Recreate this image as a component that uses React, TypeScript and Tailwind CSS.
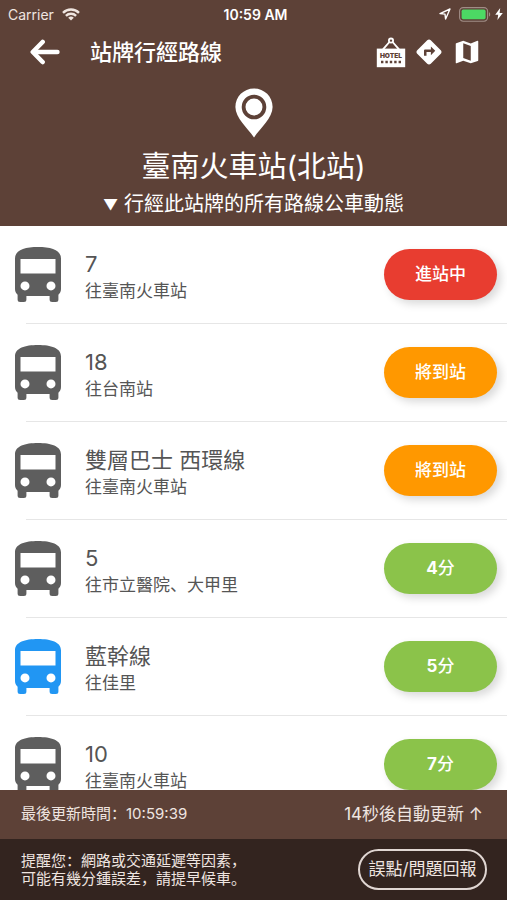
import clsx from 'clsx';
import { MdDirections, MdMap } from 'react-icons/md';

type Status = 'arriving' | 'soon' | 'minutes';

interface RouteDef {
  name: string;
  destination: string;
  status: Status;
  minutes?: number;
  trunk?: boolean;
}

const routes: RouteDef[] = [
  { name: '7', destination: '往臺南火車站', status: 'arriving' },
  { name: '18', destination: '往台南站', status: 'soon' },
  { name: '雙層巴士 西環線', destination: '往臺南火車站', status: 'soon' },
  { name: '5', destination: '往市立醫院、大甲里', status: 'minutes', minutes: 4 },
  { name: '藍幹線', destination: '往佳里', status: 'minutes', minutes: 5, trunk: true },
  { name: '10', destination: '往臺南火車站', status: 'minutes', minutes: 7 },
];

const statusColor: Record<Status, string> = {
  arriving: 'bg-[#e83d30]',
  soon: 'bg-[#ff9800]',
  minutes: 'bg-[#8bc34a]',
};

const statusLabel: Record<Status, string> = {
  arriving: '進站中',
  soon: '將到站',
  minutes: '分',
};

function WifiIcon() {
  return (
    <svg aria-hidden viewBox="0 0 18 13" className="h-[13px] w-[18px]" fill="none" stroke="currentColor" strokeWidth="2.4">
      <path d="M1 4.8a11.4 11.4 0 0 1 16 0" />
      <path d="M3.9 7.8a7.2 7.2 0 0 1 10.2 0" />
      <path d="M9 12.6 6.2 9.8a4 4 0 0 1 5.6 0z" fill="currentColor" stroke="none" />
    </svg>
  );
}

function LocationIcon() {
  return (
    <svg aria-hidden viewBox="0 0 12 12" className="h-3 w-3" fill="none" stroke="currentColor" strokeWidth="1.4" strokeLinejoin="round">
      <path d="M1 5.6 11 1 6.6 11 6 6.1z" />
    </svg>
  );
}

function BatteryIcon() {
  return (
    <svg aria-hidden viewBox="0 0 32 15" className="h-[15px] w-8">
      <rect x=".6" y=".6" width="28" height="13.6" rx="3.6" fill="none" stroke="#a08d86" strokeWidth="1.1" />
      <rect x="2.6" y="2.6" width="24" height="9.6" rx="1.6" fill="#4cd964" />
      <path d="M30 5.2c1.6.6 1.6 3.8 0 4.4z" fill="#a08d86" />
    </svg>
  );
}

function BoltIcon() {
  return (
    <svg aria-hidden viewBox="0 0 8 12" className="h-3 w-2" fill="currentColor">
      <path d="M5.2 0 .2 6.8h3L2.4 12 7.8 4.9H4.6z" />
    </svg>
  );
}

function BackIcon() {
  return (
    <svg
      aria-hidden
      viewBox="0 0 30 26"
      className="h-[26px] w-[30px]"
      fill="none"
      stroke="currentColor"
      strokeWidth="4.6"
      strokeLinecap="round"
      strokeLinejoin="round"
    >
      <path d="M12.6 3 2.8 13l9.8 10" />
      <path d="M4 13h23.4" />
    </svg>
  );
}

function HotelIcon() {
  return (
    <svg aria-hidden viewBox="0 0 30 31" className="h-[31px] w-[30px]">
      <circle cx="15" cy="3.6" r="2.1" fill="none" stroke="#fff" strokeWidth="1.8" />
      <path d="M13.4 5 7 12.4M16.6 5 23 12.4" stroke="#fff" strokeWidth="1.9" />
      <path d="M.8 11.6h28.4v18.6H.8z" fill="#fff" />
      <text x="15" y="20.9" textAnchor="middle" fontSize="6.6" fontWeight="900" fill="#5d4137" fontFamily="Inter, sans-serif">
        HOTEL
      </text>
      <path d="M5 25h20" stroke="#5d4137" strokeWidth="2.4" strokeDasharray="2.4 2" />
    </svg>
  );
}

function PinIcon() {
  return (
    <svg aria-hidden viewBox="0 0 38 50" className="h-[50px] w-[38px]">
      <path d="M19 .5C8.6.5.4 8.7.4 18.9.4 30 12.5 39.5 19 49.5 25.5 39.5 37.6 30 37.6 18.9 37.6 8.7 29.4.5 19 .5z" fill="#fff" />
      <circle cx="19" cy="19" r="10.4" fill="#fff" stroke="#5d4137" strokeWidth="3.8" />
    </svg>
  );
}

function BusIcon({ trunk }: { trunk?: boolean }) {
  return (
    <svg
      aria-hidden
      viewBox="0 0 46 55"
      className={clsx('h-[55px] w-[46px] shrink-0', trunk ? 'text-[#2196f3]' : 'text-[#5e5e5e]')}
    >
      <path
        fill="currentColor"
        fillRule="evenodd"
        d="M0 11.5C0 3 10 0 23 0s23 3 23 11.5V42c0 2.4-1 4.2-2.6 5.8v4.7a2.5 2.5 0 0 1-2.5 2.5h-3.800a2.500 2.500 0 0 1-2.500-2.500V49H11.400v3.500A2.500 2.500 0 0 1 8.900 55H5.100a2.500 2.500 0 0 1-2.500-2.500V47.800C1 46.200 0 44.400 0 42zM5.500 12v14.500h35V12zM10 34.400a4.500 4.500 0 1 0 0 9 4.500 4.500 0 0 0 0-9zm26 0a4.500 4.500 0 1 0 0 9 4.500 4.500 0 0 0 0-9z"
      />
    </svg>
  );
}

function StatusBar() {
  return (
    <div className="grid h-7 grid-cols-3 items-center pl-2 pr-1 text-[14px]">
      <div className="flex items-center gap-2 text-[#efe5e0]">
        Carrier
        <WifiIcon />
      </div>
      <time className="text-center font-semibold">10:59 AM</time>
      <div className="flex items-center justify-end gap-2">
        <LocationIcon />
        <div className="flex items-center gap-1">
          <BatteryIcon />
          <BoltIcon />
        </div>
      </div>
    </div>
  );
}

function Header() {
  return (
    <header className="shrink-0 bg-[#5d4137] pb-[5px] text-white">
      <StatusBar />
      <nav className="flex h-12 items-center pl-[30px] pr-[25px]">
        <button type="button" aria-label="返回">
          <BackIcon />
        </button>
        <h1 className="ml-[30px] text-[22px] font-medium">站牌行經路線</h1>
        <div className="ml-auto flex items-center gap-2">
          <button type="button" aria-label="住宿">
            <HotelIcon />
          </button>
          <button type="button" aria-label="路線規劃">
            <MdDirections className="size-[30px]" />
          </button>
          <button type="button" aria-label="地圖">
            <MdMap className="size-[30px]" />
          </button>
        </div>
      </nav>
      <div className="flex flex-col items-center pt-3">
        <PinIcon />
        <h2 className="mt-[9px] text-[29px] leading-10">臺南火車站(北站)</h2>
        <p className="flex items-center gap-1.5 text-[20px] leading-[34px]">
          <span className="text-[15px] leading-none">▼</span>
          <span>行經此站牌的所有路線公車動態</span>
        </p>
      </div>
    </header>
  );
}

function RouteRow({ route }: { route: RouteDef }) {
  return (
    <li>
      <div className="flex h-[97px] items-center pl-[15px] pr-2.5">
        <BusIcon trunk={route.trunk} />
        <div className="ml-6 min-w-0 flex-1 pt-1 text-[#555]">
          <h3 className="text-[22px] leading-7">{route.name}</h3>
          <p className="text-[17px] leading-[26px]">{route.destination}</p>
        </div>
        <button
          type="button"
          className={clsx(
            'h-[51px] w-[113px] shrink-0 rounded-full text-[17px] font-medium text-white shadow-[4px_4px_8px_rgba(0,0,0,0.15)]',
            statusColor[route.status],
          )}
        >
          {route.minutes && <span className="font-bold">{route.minutes}</span>}
          {statusLabel[route.status]}
        </button>
      </div>
      <div className="ml-[26px] h-px bg-[#e6e6e6]" />
    </li>
  );
}

function Footer() {
  return (
    <footer className="shrink-0 text-[#efe5e0]">
      <div className="flex h-[49px] items-center justify-between bg-[#5d4137] pl-[21px] pr-6">
        <p className="text-[15px]">最後更新時間：10:59:39</p>
        <button type="button" className="text-[17px]">
          14秒後自動更新 ↑
        </button>
      </div>
      <div className="flex h-[61px] items-center justify-between bg-[#33241f] pl-[21px] pr-5">
        <p className="text-[15px] leading-[18px]">
          提醒您：網路或交通延遲等因素，
          <br />
          可能有幾分鍾誤差，請提早候車。
        </p>
        <button type="button" className="h-[41px] w-[129px] shrink-0 rounded-full border-2 border-[#e0d6d2] text-[17px]">
          誤點/問題回報
        </button>
      </div>
    </footer>
  );
}

export default function App() {
  return (
    <div className="flex h-screen flex-col bg-white font-['Inter','Noto_Sans_CJK_SC',sans-serif]">
      <Header />
      <main className="min-h-0 flex-1 overflow-y-auto [scrollbar-width:none]">
        <ul>
          {routes.map((route, i) => (
            <RouteRow key={i} route={route} />
          ))}
        </ul>
      </main>
      <Footer />
    </div>
  );
}
